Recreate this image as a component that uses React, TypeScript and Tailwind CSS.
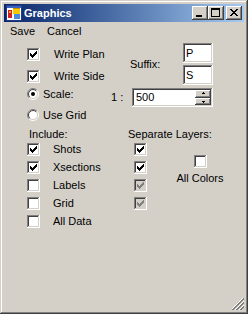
import React from "react"

/* classic win2k dialog palette */
const FACE = "#D4D0C8"

/* ---------- small glyphs ----------------------------------------- */
function CheckGlyph({ color = "#000" }: { color?: string }) {
  // 7x7 classic check mark, one 3px column per x
  const cols = [2, 3, 4, 3, 2, 1, 0]
  return (
    <svg width="7" height="7" shapeRendering="crispEdges" className="absolute left-[3px] top-[3px]">
      {cols.map((y, x) => (
        <rect key={x} x={x} y={y} width="1" height="3" fill={color} />
      ))}
    </svg>
  )
}

function Check({ checked = false, disabled = false }: { checked?: boolean; disabled?: boolean }) {
  return (
    <div
      className={
        "relative w-[13px] h-[13px] shrink-0 shadow-[inset_-1px_-1px_#fff,inset_1px_1px_#808080,inset_-2px_-2px_#D4D0C8,inset_2px_2px_#404040] " +
        (disabled ? "bg-[#D4D0C8]" : "bg-white")
      }
    >
      {checked && <CheckGlyph color={disabled ? "#808080" : "#000"} />}
    </div>
  )
}

function arc(r: number, first: boolean) {
  const c = 6
  const k = r * Math.SQRT1_2
  const a = `${c - k} ${c + k}`
  const b = `${c + k} ${c - k}`
  return first ? `M ${a} A ${r} ${r} 0 0 1 ${b}` : `M ${b} A ${r} ${r} 0 0 1 ${a}`
}

function Radio({ checked = false }: { checked?: boolean }) {
  return (
    <svg width="12" height="12" className="shrink-0">
      <circle cx="6" cy="6" r="4.5" fill="#fff" />
      <path d={arc(5.5, true)} stroke="#808080" fill="none" />
      <path d={arc(5.5, false)} stroke="#fff" fill="none" />
      <path d={arc(4.5, true)} stroke="#404040" fill="none" />
      <path d={arc(4.5, false)} stroke="#D4D0C8" fill="none" />
      {checked && <circle cx="6" cy="6" r="2" fill="#000" />}
    </svg>
  )
}

const raised =
  "shadow-[inset_-1px_-1px_#404040,inset_1px_1px_#fff,inset_-2px_-2px_#808080,inset_2px_2px_#D4D0C8] bg-[#D4D0C8]"
const sunken =
  "shadow-[inset_-1px_-1px_#fff,inset_1px_1px_#808080,inset_-2px_-2px_#D4D0C8,inset_2px_2px_#404040] bg-white"

function CaptionBtn({ kind }: { kind: "min" | "max" | "close" }) {
  return (
    <div className={"relative w-[16px] h-[14px] " + raised}>
      <svg width="16" height="14" shapeRendering="crispEdges" className="absolute inset-0">
        {kind === "min" && <rect x="4" y="9" width="6" height="2" fill="#000" />}
        {kind === "max" && (
          <>
            <rect x="3" y="2" width="9" height="2" fill="#000" />
            <rect x="3" y="4" width="1" height="7" fill="#000" />
            <rect x="11" y="4" width="1" height="7" fill="#000" />
            <rect x="3" y="10" width="9" height="1" fill="#000" />
          </>
        )}
        {kind === "close" &&
          [0, 1, 2, 3, 4, 5, 6].map((i) => {
            const d = i <= 3 ? i : 6 - i
            return (
              <g key={i}>
                <rect x={4 + d} y={3 + i} width="2" height="1" fill="#000" />
                <rect x={10 - d} y={3 + i} width="2" height="1" fill="#000" />
              </g>
            )
          })}
      </svg>
    </div>
  )
}

function AppIcon() {
  return (
    <svg width="16" height="16" shapeRendering="crispEdges" className="shrink-0">
      <rect x="0" y="0" width="16" height="16" fill="#1C3C8C" />
      <rect x="1" y="1" width="14" height="14" fill="#fff" />
      <rect x="1" y="1" width="14" height="2" fill="#3A62C0" />
      <rect x="2" y="5" width="4" height="8" fill="#D42020" />
      <rect x="3" y="6" width="2" height="2" fill="#F8A030" />
      <rect x="7" y="3" width="7" height="6" fill="#F8C800" />
      <rect x="7" y="3" width="7" height="1" fill="#C89000" />
      <rect x="8" y="9" width="6" height="5" fill="#4A8AE0" />
    </svg>
  )
}

function Grip() {
  const px: React.ReactElement[] = []
  const lines: [number, string][] = [
    [10, "#fff"], [11, "#808080"], [12, "#808080"],
    [14, "#fff"], [15, "#808080"], [16, "#808080"],
    [18, "#fff"], [19, "#808080"], [20, "#808080"],
  ]
  lines.forEach(([s, c]) => {
    for (let x = 0; x < 12; x++) {
      const y = s - x
      if (y >= 0 && y < 12) px.push(<rect key={s + "-" + x} x={x} y={y} width="1" height="1" fill={c} />)
    }
  })
  return (
    <svg width="12" height="12" shapeRendering="crispEdges" className="absolute right-[4px] bottom-[4px]">
      {px}
    </svg>
  )
}

/* ---------- rows -------------------------------------------------- */
function CheckRow({ label, checked, gap }: { label: string; checked?: boolean; gap: string }) {
  return (
    <div className="flex items-center h-[13px]">
      <Check checked={checked} />
      <span className={gap + " leading-[13px]"}>{label}</span>
    </div>
  )
}

export default function App() {
  return (
    <div className="w-[248px] h-[314px] relative bg-[#D4D0C8] p-[4px] flex flex-col shadow-[inset_-1px_-1px_#404040,inset_1px_1px_#D4D0C8,inset_-2px_-2px_#808080,inset_2px_2px_#fff] font-['Liberation_Sans',Arial,sans-serif] text-[11px] text-black select-none">
      {/* title bar */}
      <div className="h-[18px] flex items-center pl-[2px] pr-[2px] bg-gradient-to-r from-[#0A246A] to-[#A6CAF0]">
        <AppIcon />
        <span className="ml-[2px] text-white font-bold text-[11px] leading-[13px]">Graphics</span>
        <div className="ml-auto flex items-center">
          <CaptionBtn kind="min" />
          <CaptionBtn kind="max" />
          <div className="w-[2px]" />
          <CaptionBtn kind="close" />
        </div>
      </div>

      {/* menu */}
      <div className="h-[19px] flex items-center pl-[6px]">
        <span>Save</span>
        <span className="ml-[12px]">Cancel</span>
      </div>

      {/* body */}
      <div className="flex flex-col pl-[23px]">
        {/* write plan / side + suffix */}
        <div className="flex mt-[2px]">
          <div className="w-[103px] pt-[5px] flex flex-col gap-[9px]">
            <CheckRow label="Write Plan" checked gap="ml-[14px]" />
            <CheckRow label="Write Side" checked gap="ml-[14px]" />
          </div>
          <div className="w-[53px] pt-[15px] leading-[13px]">Suffix:</div>
          <div className="flex flex-col gap-[2px]">
            <div className={"w-[30px] h-[20px] pl-[3px] flex items-center " + sunken}>P</div>
            <div className={"w-[30px] h-[20px] pl-[3px] flex items-center " + sunken}>S</div>
          </div>
        </div>

        {/* scale / grid */}
        <div className="flex mt-[2px]">
          <div className="w-[84px] pt-[1px] flex flex-col gap-[9px]">
            <div className="flex items-center h-[12px]">
              <Radio checked />
              <span className="ml-[4px] leading-[13px]">Scale:</span>
            </div>
            <div className="flex items-center h-[12px]">
              <Radio />
              <span className="ml-[4px] leading-[13px]">Use Grid</span>
            </div>
          </div>
          <div className="w-[21px] pt-[4px] leading-[13px]">1 :</div>
          <div className={"mt-[1px] w-[81px] h-[19px] flex items-stretch p-[2px] " + sunken}>
            <span className="flex-1 pl-[2px] flex items-center">500</span>
            <div className="w-[16px] flex flex-col">
              <div className={"flex-1 flex items-center justify-center " + raised}>
                <svg width="5" height="3" shapeRendering="crispEdges">
                  <rect x="2" y="0" width="1" height="1" fill="#000" />
                  <rect x="1" y="1" width="3" height="1" fill="#000" />
                </svg>
              </div>
              <div className={"flex-1 flex items-center justify-center " + raised}>
                <svg width="5" height="3" shapeRendering="crispEdges">
                  <rect x="1" y="1" width="3" height="1" fill="#000" />
                  <rect x="2" y="2" width="1" height="1" fill="#000" />
                </svg>
              </div>
            </div>
          </div>
        </div>

        {/* headers */}
        <div className="flex mt-[7px] leading-[13px]">
          <span className="w-[99px] ml-[2px]">Include:</span>
          <span>Separate Layers:</span>
        </div>

        {/* include / layers */}
        <div className="flex mt-[2px]">
          <div className="w-[107px] flex flex-col gap-[5px]">
            <CheckRow label="Shots" checked gap="ml-[13px]" />
            <CheckRow label="Xsections" checked gap="ml-[13px]" />
            <CheckRow label="Labels" gap="ml-[13px]" />
            <CheckRow label="Grid" gap="ml-[13px]" />
            <CheckRow label="All Data" gap="ml-[13px]" />
          </div>
          <div className="w-[44px] flex flex-col gap-[5px]">
            <Check checked />
            <Check checked />
            <Check checked disabled />
            <Check checked disabled />
          </div>
          <div className="w-[44px] pt-[12px] flex flex-col items-center gap-[4px]">
            <Check />
            <span className="leading-[13px] whitespace-nowrap">All Colors</span>
          </div>
        </div>
      </div>

      <Grip />
    </div>
  )
}
